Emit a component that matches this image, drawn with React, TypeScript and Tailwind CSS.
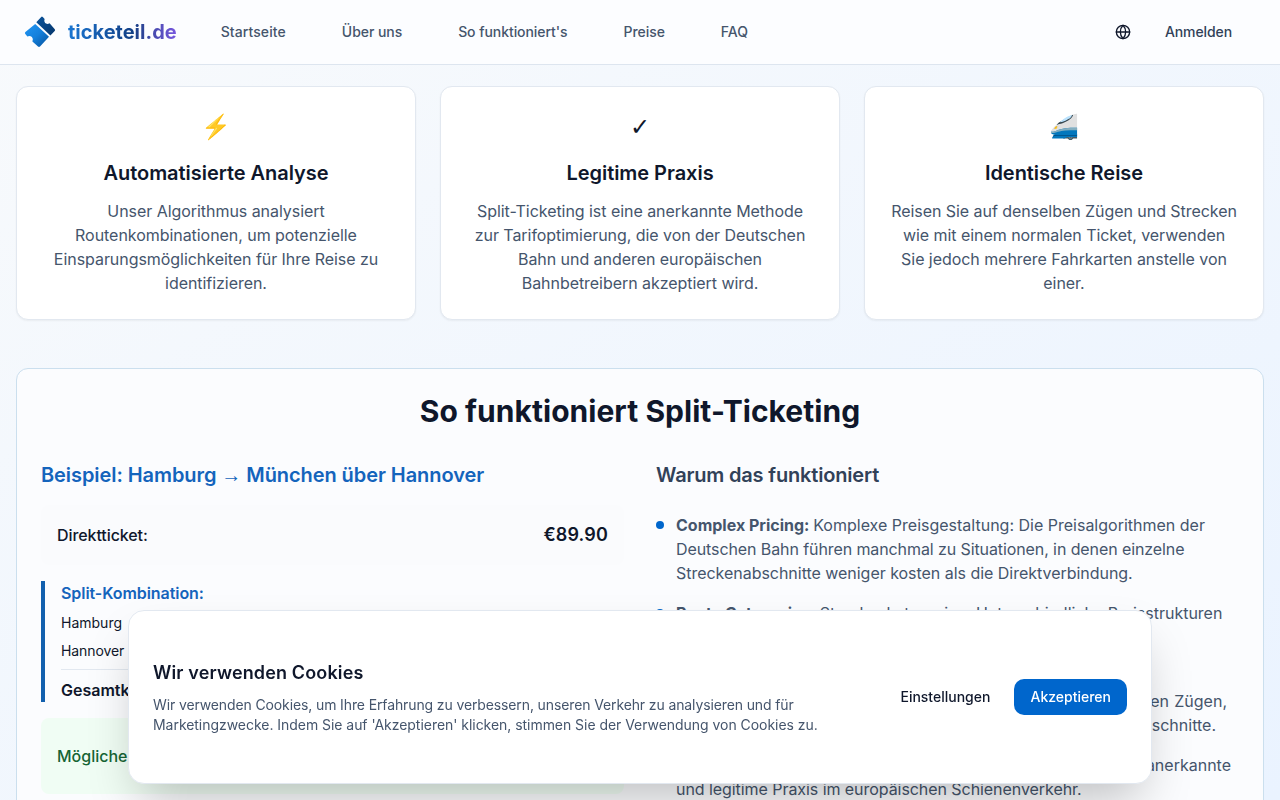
import React from 'react';
import { Globe } from 'lucide-react';

const navLinks = ['Startseite', 'Über uns', "So funktioniert's", 'Preise', 'FAQ'];

const features = [
	{
		icon: '⚡',
		title: 'Automatisierte Analyse',
		text: 'Unser Algorithmus analysiert Routenkombinationen, um potenzielle Einsparungsmöglichkeiten für Ihre Reise zu identifizieren.',
	},
	{
		icon: '✓',
		title: 'Legitime Praxis',
		text: 'Split-Ticketing ist eine anerkannte Methode zur Tarifoptimierung, die von der Deutschen Bahn und anderen europäischen Bahnbetreibern akzeptiert wird.',
	},
	{
		icon: '🚄',
		title: 'Identische Reise',
		text: 'Reisen Sie auf denselben Zügen und Strecken wie mit einem normalen Ticket, verwenden Sie jedoch mehrere Fahrkarten anstelle von einer.',
	},
];

const reasons = [
	{
		label: 'Complex Pricing:',
		lines: [
			{ text: 'Komplexe Preisgestaltung: Die Preisalgorithmen der', className: '' },
			{ text: 'Deutschen Bahn führen manchmal zu Situationen, in denen einzelne', className: 'tracking-[-0.095px]' },
			{ text: 'Streckenabschnitte weniger kosten als die Direktverbindung.', className: 'tracking-[-0.03px]' },
		],
	},
	{
		label: 'Route Categories:',
		lines: [
			{ text: 'Streckenkategorien: Unterschiedliche Preisstrukturen', className: 'tracking-[-0.015px]' },
			{ text: 'je nach Strecke und Zuggattung.', className: '' },
		],
	},
	{
		label: 'Same Journey:',
		lines: [
			{ text: 'Identische Reise: Sie reisen auf der', className: '' },
			{ text: 'Strecke während der ganzen Fahrt durchgehend in den gleichen Zügen,', className: 'w-[551px] [text-align-last:justify]' },
			{ text: 'nutzen dabei aber separate Tickets für einzelne Streckenabschnitte.', className: 'w-[540px] [text-align-last:justify]' },
		],
	},
	{
		label: 'Legitimate Practice:',
		lines: [
			{ text: 'Legitime Praxis: Split-Ticketing ist eine anerkannte', className: 'w-[555px] [text-align-last:justify]' },
			{ text: 'und legitime Praxis im europäischen Schienenverkehr.', className: 'tracking-[-0.06px]' },
		],
	},
];

const Logo: React.FC = () => (
	<svg width="32" height="32" viewBox="0 0 32 32">
		<defs>
			<linearGradient id="ticketLight" x1="0" y1="0" x2="1" y2="1">
				<stop offset="0" stopColor="#2196f3" />
				<stop offset="0.5" stopColor="#1580dc" />
				<stop offset="1" stopColor="#06519b" />
			</linearGradient>
			<linearGradient id="ticketDark" x1="0" y1="0" x2="1" y2="1">
				<stop offset="0" stopColor="#0a549c" />
				<stop offset="1" stopColor="#06366c" />
			</linearGradient>
		</defs>
		<path d="M11.2 8L25 20.8L16 30.5Q15 31.4 14 30.5L8.4 25.4Q9.6 23 7.9 21.1Q6 19.4 3.4 20.4L1.3 18Q.4 17 1.4 16.1Z" fill="url(#ticketLight)" />
		<path d="M12.3 6.2L17.2.9Q18 .2 18.8 1L20.6 3Q19.6 5.6 21.1 7.1Q23 8.6 25.6 7.3L30.8 13.2Q31.5 14.1 30.7 15L26.4 19.4Z" fill="url(#ticketDark)" />
	</svg>
);

const Header: React.FC = () => (
	<header className="flex h-[65px] shrink-0 items-center border-b border-[#dde5ef] bg-[#fcfdff] pl-6 pr-12">
		<div className="flex items-center gap-3">
			<Logo />
			<span className="bg-linear-to-r from-[#1976d2] via-[#123f85] via-60% to-[#7857e0] bg-clip-text text-xl font-bold leading-7 text-transparent">
				ticketeil.de
			</span>
		</div>
		<nav className="ml-11 flex gap-14 text-sm font-medium text-slate-600">
			{navLinks.map((link) => (
				<a key={link} href="#" className="tracking-[-0.06px] first:tracking-[0.09px]">{link}</a>
			))}
		</nav>
		<div className="ml-auto flex items-center gap-[34px] text-sm font-medium text-slate-700">
			<Globe size={16} className="text-slate-900" />
			<a href="#" className="tracking-[-0.1px]">Anmelden</a>
		</div>
	</header>
);

const Example: React.FC = () => (
	<div>
		<h3 className="mb-4 text-xl font-semibold tracking-[-0.07px] text-[#1464bc]">
			Beispiel: Hamburg <span className="font-['Liberation_Sans'] font-normal leading-none">→</span> München über Hannover
		</h3>
		<div className="space-y-4">
			<div className="flex items-center justify-between rounded-lg bg-[#fafbfd] p-4">
				<span className="font-medium tracking-[-0.08px]">Direktticket:</span>
				<span className="text-lg font-semibold tracking-[0.15px]">€89.90</span>
			</div>
			<div className="border-l-4 border-[#1260ae] pl-4">
				<div className="mb-2 font-semibold tracking-[-0.06px] text-[#1464bc]">Split-Kombination:</div>
				<div className="space-y-2 text-sm">
					<div className="flex justify-between"><span>Hamburg &nbsp;→ Hannover:</span><span>€29.90</span></div>
					<div className="flex justify-between"><span className="tracking-[-0.1px]">Hannover → München:</span><span>€39.90</span></div>
					<div className="flex justify-between border-t border-slate-200 pt-2 text-base font-semibold">
						<span>Gesamtkosten:</span>
						<span>€69.80</span>
					</div>
				</div>
			</div>
			<div className="flex h-[76px] items-center justify-between rounded-lg bg-[#f0fdf4] px-4 text-[#166534]">
				<span className="font-medium">Mögliche Ersparnis:</span>
				<span className="text-lg font-bold">€20.10</span>
			</div>
		</div>
	</div>
);

const CookieBanner: React.FC = () => (
	<div className="fixed bottom-4 left-32 flex h-[174px] w-[1024px] items-center justify-between rounded-2xl border border-slate-200 bg-white px-6 shadow-2xl">
		<div className="w-[690px]">
			<h3 className="mb-2 text-lg font-semibold tracking-[0.14px]">Wir verwenden Cookies</h3>
			<p className="text-sm text-slate-600">
				<span className="block tracking-[-0.12px]">Wir verwenden Cookies, um Ihre Erfahrung zu verbessern, unseren Verkehr zu analysieren und für</span>
				<span className="block tracking-[-0.04px]">Marketingzwecke. Indem Sie auf 'Akzeptieren' klicken, stimmen Sie der Verwendung von Cookies zu.</span>
			</p>
		</div>
		<div className="flex gap-2 text-sm font-medium">
			<button className="h-9 px-4">Einstellungen</button>
			<button className="h-9 rounded-[10px] bg-[#0066cc] px-4 text-white">Akzeptieren</button>
		</div>
	</div>
);

const App: React.FC = () => {
	return (
		<div className="flex h-screen flex-col overflow-hidden bg-linear-to-br from-[#f8fafc] to-[#eaf3ff] font-[Inter,'DejaVu_Sans',sans-serif] text-slate-900">
			<Header />
			<main className="px-4 pt-[21px]">
				<div className="mb-12 grid grid-cols-3 gap-6">
					{features.map((feature) => (
						<div key={feature.title} className="rounded-xl border border-slate-200 bg-white p-6 text-center shadow-xs">
							<div className="mb-4 h-8 font-['Noto_Color_Emoji','DejaVu_Sans',sans-serif] text-2xl leading-8">{feature.icon}</div>
							<h3 className="mb-3 text-xl font-semibold tracking-[-0.04px]">{feature.title}</h3>
							<p className="px-px tracking-[-0.05px] text-slate-600">{feature.text}</p>
						</div>
					))}
				</div>
				<section className="rounded-xl border border-[#cbdfee] bg-[#fbfcfe] p-6">
					<h2 className="mb-8 text-center text-3xl font-bold tracking-[0.04px]">So funktioniert Split-Ticketing</h2>
					<div className="grid grid-cols-2 gap-8">
						<Example />
						<div>
							<h3 className="mb-6 text-xl font-semibold tracking-[-0.17px] text-slate-700">Warum das funktioniert</h3>
							<ul className="space-y-4 text-slate-600">
								{reasons.map((reason) => (
									<li key={reason.label} className="flex gap-3">
										<span className="mt-2 size-2 shrink-0 rounded-full bg-[#0066cc]" />
										<div className="whitespace-nowrap">
											{reason.lines.map((line, i) => (
												<p key={line.text} className={line.className}>
													{i === 0 && <strong>{reason.label} </strong>}
													{line.text}
												</p>
											))}
										</div>
									</li>
								))}
							</ul>
						</div>
					</div>
				</section>
			</main>
			<CookieBanner />
		</div>
	);
};

export default App;
